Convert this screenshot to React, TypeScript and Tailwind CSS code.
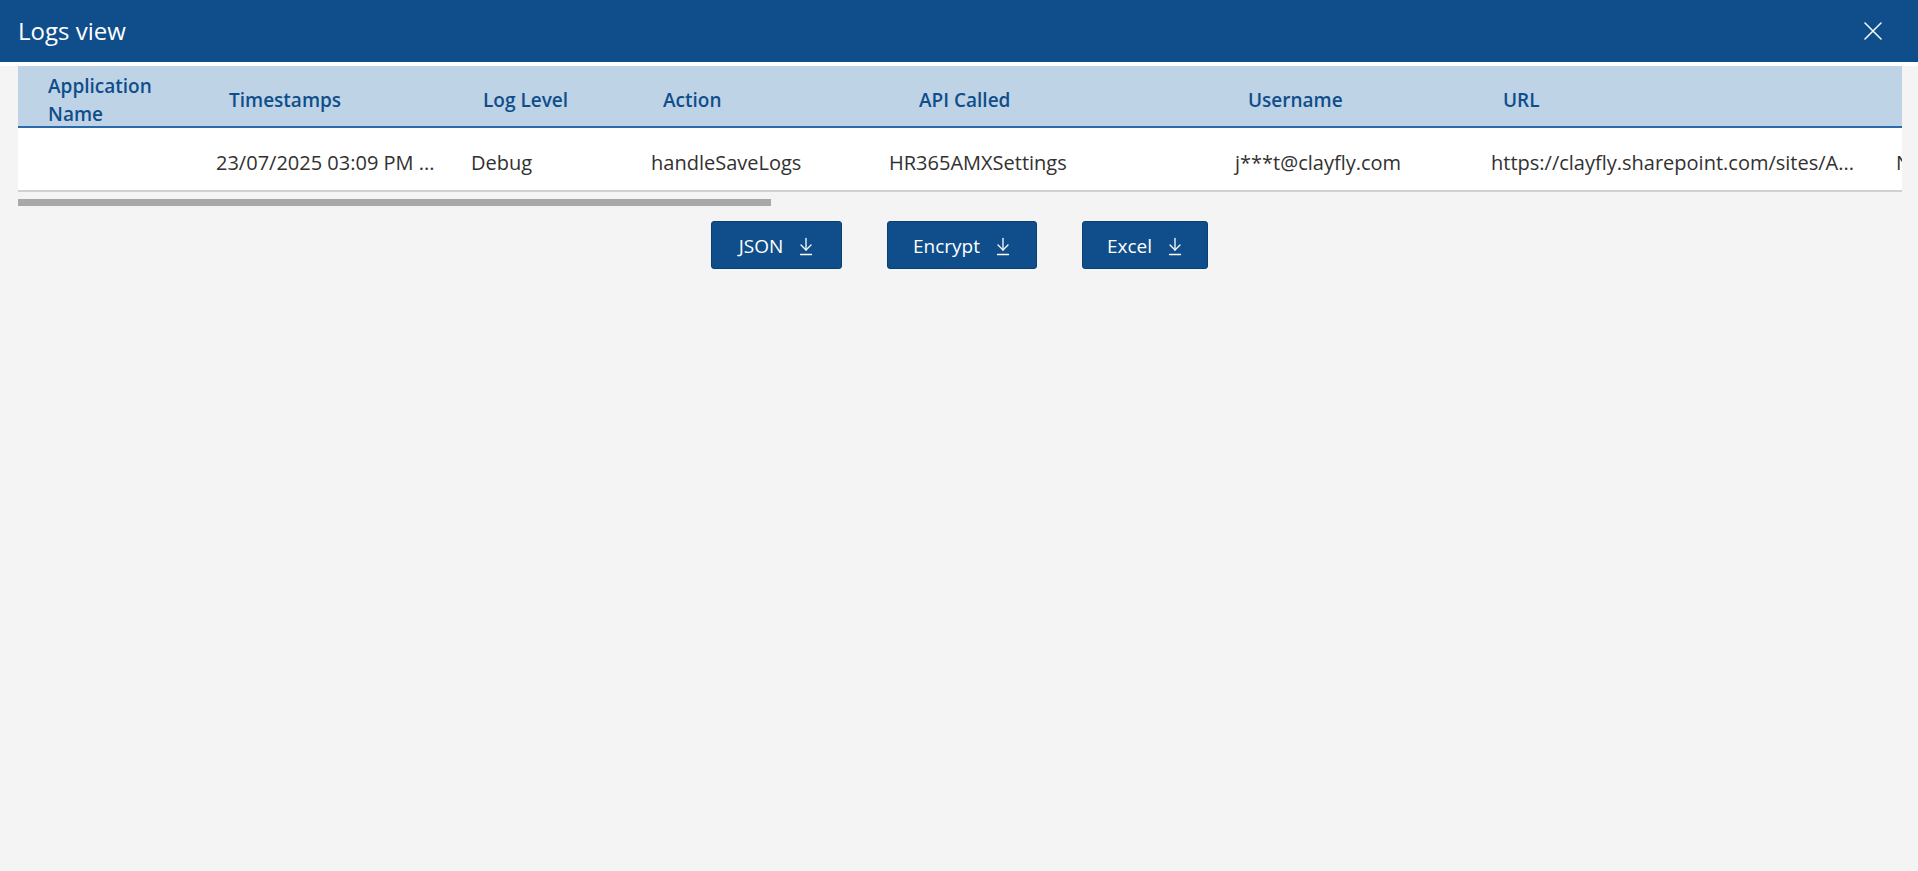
import React from 'react';

type Col = { key: string; label: React.ReactNode; width: number; headPad: number; cellPad: number; value: string };

const columns: Col[] = [
  { key: 'app', label: <>Application<br />Name</>, width: 186, headPad: 30, cellPad: 12, value: '' },
  { key: 'ts', label: 'Timestamps', width: 255, headPad: 25, cellPad: 12, value: '23/07/2025 03:09 PM ...' },
  { key: 'level', label: 'Log Level', width: 180, headPad: 24, cellPad: 12, value: 'Debug' },
  { key: 'action', label: 'Action', width: 238, headPad: 24, cellPad: 12, value: 'handleSaveLogs' },
  { key: 'api', label: 'API Called', width: 346, headPad: 42, cellPad: 12, value: 'HR365AMXSettings' },
  { key: 'user', label: 'Username', width: 256, headPad: 25, cellPad: 12, value: 'j***t@clayfly.com' },
  { key: 'url', label: 'URL', width: 405, headPad: 24, cellPad: 12, value: 'https://clayfly.sharepoint.com/sites/A...' },
  { key: 'msg', label: '', width: 18, headPad: 0, cellPad: 12, value: 'N' },
];

function DownloadIcon() {
  return (
    <svg width="14" height="19" viewBox="0 0 14 19" fill="none" stroke="white" strokeWidth="1.3" strokeLinecap="round" strokeLinejoin="round">
      <path d="M7 1.5V13" />
      <path d="M2 8L7 13L12 8" />
      <path d="M1.5 17.5H12.5" />
    </svg>
  );
}

function ActionButton({ label, width }: { label: string; width: string }) {
  return (
    <button className={`${width} h-[48px] pt-[3px] flex items-center justify-center gap-[16px] rounded-[3px] border border-[#0b3f72] bg-[#0f4e8a] text-white text-[19px]`}>
      <span>{label}</span>
      <DownloadIcon />
    </button>
  );
}

export default function App() {
  return (
    <div className="w-full h-[871px] bg-[#f4f4f4] font-['Open_Sans',sans-serif] overflow-hidden">
      <div className="h-[62px] bg-[#0f4e8a] flex items-center justify-between pl-[18px] pr-[36px]">
        <span className="text-white text-[24px] leading-none">Logs view</span>
        <svg width="18" height="18" viewBox="0 0 18 18" stroke="white" strokeWidth="1.5" strokeLinecap="round">
          <path d="M1 1L17 17M17 1L1 17" />
        </svg>
      </div>
      <div className="h-[4px] bg-white" />
      <div className="ml-[18px] w-[1884px] overflow-hidden">
        <div className="flex">
          {columns.map((c) => (
            <div key={c.key} className="shrink-0 overflow-hidden" style={{ width: c.width }}>
              <div
                className="h-[62px] pt-[7px] bg-[#bed3e6] border-b-2 border-[#2a6aa8] flex items-center text-[#0f4e8a] text-[19px] font-semibold leading-[28px] whitespace-nowrap"
                style={{ paddingLeft: c.headPad }}
              >
                <span>{c.label}</span>
              </div>
              <div
                className="h-[64px] pt-[7px] bg-white border-b-2 border-[#d2d0ce] flex items-center text-[#323130] text-[20px] whitespace-nowrap"
                style={{ paddingLeft: c.cellPad }}
              >
                {c.value}
              </div>
            </div>
          ))}
        </div>
      </div>
      <div className="ml-[18px] mt-[7px] h-[7px] w-[753px] bg-[#a8a8a8]" />
      <div className="mt-[15px] flex justify-center gap-[45px]">
        <ActionButton label="JSON" width="w-[131px]" />
        <ActionButton label="Encrypt" width="w-[150px]" />
        <ActionButton label="Excel" width="w-[126px]" />
      </div>
    </div>
  );
}
